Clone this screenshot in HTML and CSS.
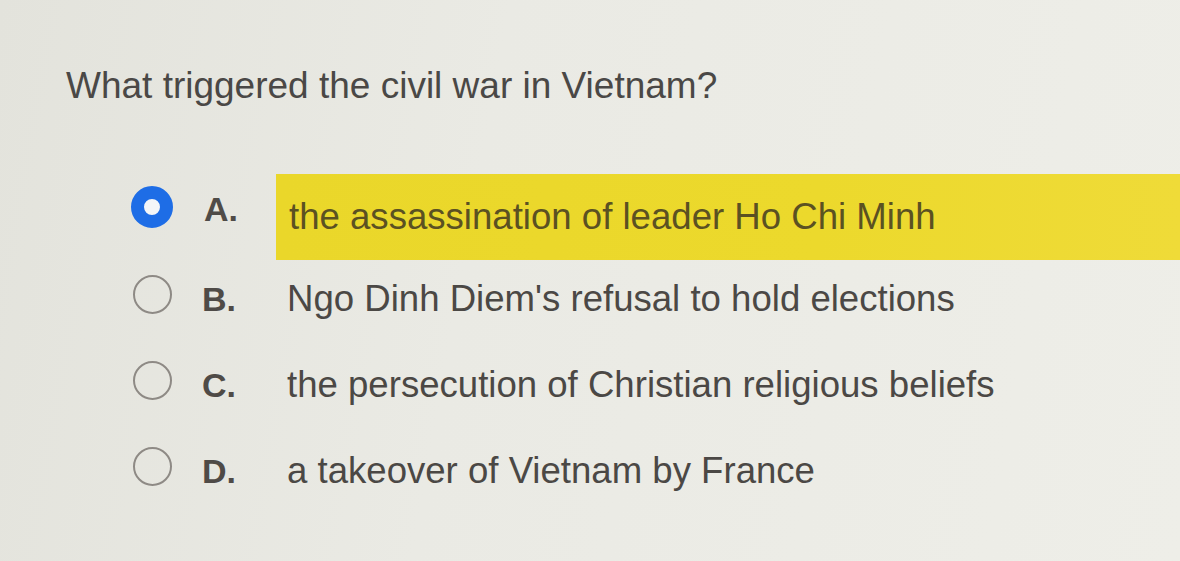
FILE: index.html
```html
<!DOCTYPE html>
<html>
<head>
<meta charset="utf-8">
<link rel="stylesheet" href="styles.css">
</head>
<body>
<main class="quiz">
  <h1 class="question">What triggered the civil war in Vietnam?</h1>
  <ul class="options">
    <li class="option selected">
      <span class="radio"></span>
      <span class="label">A.</span>
      <span class="text">the assassination of leader Ho Chi Minh</span>
    </li>
    <li class="option">
      <span class="radio"></span>
      <span class="label">B.</span>
      <span class="text">Ngo Dinh Diem's refusal to hold elections</span>
    </li>
    <li class="option">
      <span class="radio"></span>
      <span class="label">C.</span>
      <span class="text">the persecution of Christian religious beliefs</span>
    </li>
    <li class="option">
      <span class="radio"></span>
      <span class="label">D.</span>
      <span class="text">a takeover of Vietnam by France</span>
    </li>
  </ul>
</main>
</body>
</html>
```
FILE: styles.css
```css
html, body {
  margin: 0;
  padding: 0;
}
body {
  width: 1180px;
  height: 561px;
  overflow: hidden;
  background: linear-gradient(100deg, #e3e3dc 0%, #eaeae4 40%, #eeeee8 100%);
  font-family: "Liberation Sans", Arial, sans-serif;
  color: #4b4845;
}
.quiz {
  padding: 64px 0 0 66px;
}
.question {
  margin: 0;
  font-size: 37px;
  font-weight: normal;
  line-height: 44px;
  color: #4a4846;
}
.options {
  list-style: none;
  margin: 62px 0 0 0;
  padding: 0;
  display: flex;
  flex-direction: column;
}
.option {
  display: flex;
  align-items: center;
  height: 86px;
  font-size: 36.6px;
}
.radio {
  box-sizing: border-box;
  width: 39px;
  height: 39px;
  margin: 0 0 10px 67px;
  border-radius: 50%;
  border: 2.5px solid #8e8a85;
  flex: none;
}
.selected .radio {
  width: 42px;
  height: 42px;
  margin: 0 0 12px 65px;
  border: 13px solid #1e6de6;
  background: #f4f6f8;
}
.label {
  font-weight: bold;
  width: 72px;
  margin-left: 30px;
  color: #4f4b47;
  font-size: 34px;
}
.selected .label {
  margin-left: 31px;
  margin-bottom: 8px;
}
.text {
  flex: 1;
  align-self: stretch;
  display: flex;
  align-items: center;
  padding-left: 13px;
}
.selected .text {
  margin: 4px 0 -4px 0;
  background: linear-gradient(90deg, #ead72a 0%, #ecd92c 60%, #efdb38 100%);
  color: #5b5122;
}
```
